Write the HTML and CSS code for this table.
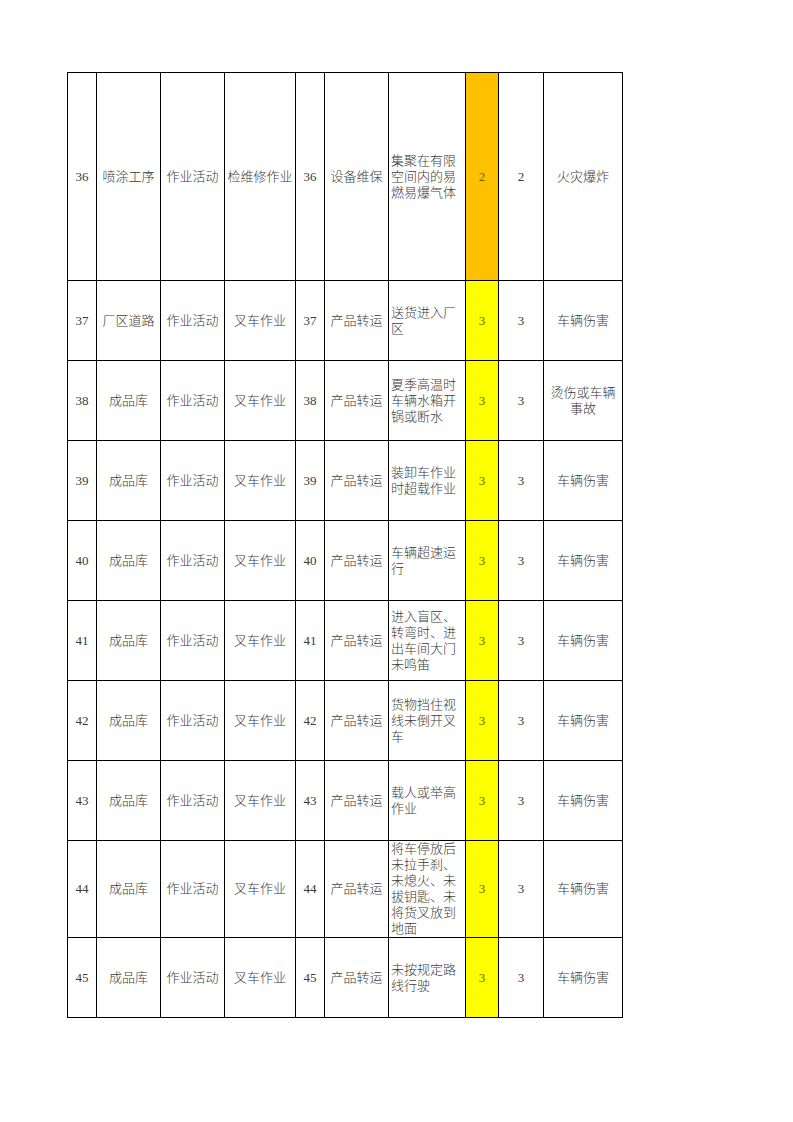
FILE: index.html
```html
<!DOCTYPE html>
<html lang="zh-CN">
<head>
<meta charset="utf-8">
<title>风险辨识表</title>
<link rel="stylesheet" href="styles.css">
</head>
<body>
<table class="sheet">
  <colgroup>
    <col class="c1"><col class="c2"><col class="c3"><col class="c4"><col class="c5">
    <col class="c6"><col class="c7"><col class="c8"><col class="c9"><col class="c10">
  </colgroup>
  <tbody>
    <tr class="r-tall">
      <td class="num">36</td><td>喷涂工序</td><td>作业活动</td><td>检维修作业</td><td class="num">36</td><td>设备维保</td>
      <td class="desc">集聚在有限空间内的易燃易爆气体</td><td class="num lv orange">2</td><td class="num">2</td><td>火灾爆炸</td>
    </tr>
    <tr class="r">
      <td class="num">37</td><td>厂区道路</td><td>作业活动</td><td>叉车作业</td><td class="num">37</td><td>产品转运</td>
      <td class="desc">送货进入厂区</td><td class="num lv yellow">3</td><td class="num">3</td><td>车辆伤害</td>
    </tr>
    <tr class="r">
      <td class="num">38</td><td>成品库</td><td>作业活动</td><td>叉车作业</td><td class="num">38</td><td>产品转运</td>
      <td class="desc">夏季高温时车辆水箱开锅或断水</td><td class="num lv yellow">3</td><td class="num">3</td><td>烫伤或车辆事故</td>
    </tr>
    <tr class="r">
      <td class="num">39</td><td>成品库</td><td>作业活动</td><td>叉车作业</td><td class="num">39</td><td>产品转运</td>
      <td class="desc">装卸车作业时超载作业</td><td class="num lv yellow">3</td><td class="num">3</td><td>车辆伤害</td>
    </tr>
    <tr class="r">
      <td class="num">40</td><td>成品库</td><td>作业活动</td><td>叉车作业</td><td class="num">40</td><td>产品转运</td>
      <td class="desc">车辆超速运行</td><td class="num lv yellow">3</td><td class="num">3</td><td>车辆伤害</td>
    </tr>
    <tr class="r">
      <td class="num">41</td><td>成品库</td><td>作业活动</td><td>叉车作业</td><td class="num">41</td><td>产品转运</td>
      <td class="desc">进入盲区、转弯时、进出车间大门未鸣笛</td><td class="num lv yellow">3</td><td class="num">3</td><td>车辆伤害</td>
    </tr>
    <tr class="r">
      <td class="num">42</td><td>成品库</td><td>作业活动</td><td>叉车作业</td><td class="num">42</td><td>产品转运</td>
      <td class="desc">货物挡住视线未倒开叉车</td><td class="num lv yellow">3</td><td class="num">3</td><td>车辆伤害</td>
    </tr>
    <tr class="r">
      <td class="num">43</td><td>成品库</td><td>作业活动</td><td>叉车作业</td><td class="num">43</td><td>产品转运</td>
      <td class="desc">载人或举高作业</td><td class="num lv yellow">3</td><td class="num">3</td><td>车辆伤害</td>
    </tr>
    <tr class="r-mid">
      <td class="num">44</td><td>成品库</td><td>作业活动</td><td>叉车作业</td><td class="num">44</td><td>产品转运</td>
      <td class="desc">将车停放后未拉手刹、未熄火、未拔钥匙、未将货叉放到地面</td><td class="num lv yellow">3</td><td class="num">3</td><td>车辆伤害</td>
    </tr>
    <tr class="r">
      <td class="num">45</td><td>成品库</td><td>作业活动</td><td>叉车作业</td><td class="num">45</td><td>产品转运</td>
      <td class="desc">未按规定路线行驶</td><td class="num lv yellow">3</td><td class="num">3</td><td>车辆伤害</td>
    </tr>
  </tbody>
</table>
</body>
</html>
```

FILE: styles.css
```css
html, body {
  margin: 0;
  padding: 0;
  background: #ffffff;
}

body {
  padding: 72px 0 0 67px;
}

.sheet {
  border-collapse: collapse;
  table-layout: fixed;
  width: 556px;
  font-family: "Liberation Serif", "Noto Sans CJK SC", serif;
  font-size: 13px;
  line-height: 16px;
  color: #3a3a3a;
}

.c1 { width: 29px; }
.c2 { width: 64px; }
.c3 { width: 64px; }
.c4 { width: 71px; }
.c5 { width: 29px; }
.c6 { width: 64px; }
.c7 { width: 77px; }
.c8 { width: 33px; }
.c9 { width: 45px; }
.c10 { width: 79px; }

.sheet td {
  border: 1px solid #000000;
  padding: 0 1px;
  text-align: center;
  vertical-align: middle;
  overflow: hidden;
  font-weight: 300;
}

.r-tall { height: 208px; }
.r { height: 80px; }
.r-mid { height: 96px; }

.sheet td.desc {
  text-align: left;
  padding: 0 1px 0 2px;
}

.sheet td.num {
  font-family: "Liberation Serif", serif;
  padding: 0;
}

.sheet td.lv {
  color: #6b6100;
}

.orange { background: #ffc000; }
.yellow { background: #ffff00; }
```
